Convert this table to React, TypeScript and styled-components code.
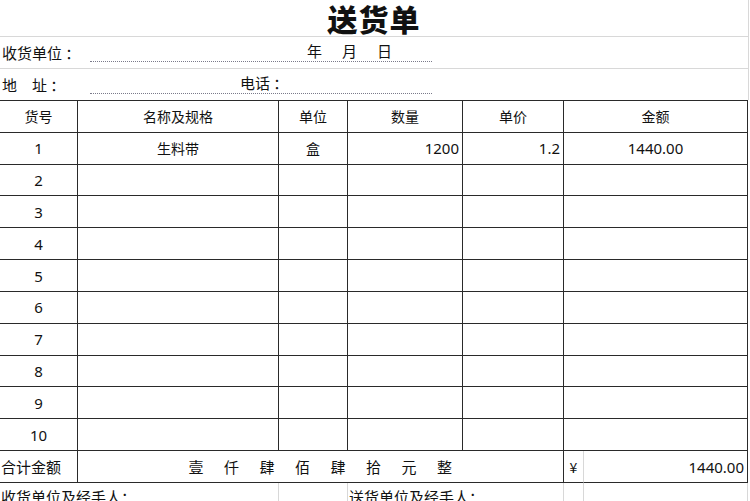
import React from "react";
import styled, { createGlobalStyle } from "styled-components";

const GlobalStyle = createGlobalStyle`
  html, body { margin: 0; padding: 0; background: #fff; }
  body {
    font-family: "Noto Sans", "Noto Sans CJK SC", sans-serif;
    color: #111;
  }
`;

const CJK = `"Noto Sans CJK SC", "Noto Sans", sans-serif`;
const NUM = `"Noto Sans", "Noto Sans CJK SC", sans-serif`;
const LINE = "#2a2a2a";
const GRID = "#d8d8d8";
const COLS = "78px 201px 69px 115px 101px 184px";

const Page = styled.div`
  width: 750px;
  height: 501px;
  overflow: hidden;
`;

const Title = styled.h1`
  margin: 0;
  width: 748px;
  height: 36px;
  border-bottom: 1px solid ${GRID};
  border-right: 1px solid ${GRID};
  display: flex;
  align-items: center;
  justify-content: center;
  font-family: ${CJK};
  font-weight: 900;
  font-size: 30px;
  letter-spacing: 1px;
  line-height: 36px;
`;

const InfoRow = styled.div<{ $last?: boolean }>`
  width: 748px;
  height: 31px;
  border-right: 1px solid ${GRID};
  border-bottom: ${(p) => (p.$last ? "none" : `1px solid ${GRID}`)};
  display: flex;
  align-items: center;
  font-family: ${CJK};
  font-size: 15px;
`;

const Label = styled.span`
  width: 90px;
  padding-left: 2px;
  box-sizing: border-box;
  white-space: pre;
`;

const Field = styled.div`
  width: 342px;
  height: 22px;
  align-self: flex-end;
  margin-bottom: 6px;
  border-bottom: 1px dotted #7a7a8a;
  display: flex;
  align-items: center;
  box-sizing: border-box;
`;

const FieldText = styled.span<{ $pad: number; $ls?: number }>`
  padding-left: ${(p) => p.$pad}px;
  letter-spacing: ${(p) => p.$ls ?? 0}px;
  white-space: pre;
  font-size: 15px;
`;

const Table = styled.div`
  width: 748px;
  border-top: 1px solid ${LINE};
  display: grid;
  grid-template-rows: repeat(12, 31.83px);
`;

const Row = styled.div<{ $cols?: string }>`
  display: grid;
  grid-template-columns: ${(p) => p.$cols ?? COLS};
`;

const Cell = styled.div<{ $align?: "left" | "center" | "right"; $num?: boolean; $soft?: boolean }>`
  box-sizing: border-box;
  border-bottom: 1px solid ${LINE};
  border-right: 1px solid ${(p) => (p.$soft ? GRID : LINE)};
  display: flex;
  align-items: center;
  justify-content: ${(p) =>
    p.$align === "left" ? "flex-start" : p.$align === "right" ? "flex-end" : "center"};
  padding: ${(p) => (p.$align === "right" ? "0 3px 0 0" : p.$align === "left" ? "0 0 0 1px" : "0")};
  font-family: ${(p) => (p.$num ? NUM : CJK)};
  font-size: ${(p) => (p.$num ? 15 : 14)}px;
  white-space: pre;
`;

const TotalLabel = styled(Cell)`
  font-size: 15px;
`;

const Words = styled.span`
  letter-spacing: 20.5px;
  padding-left: 20px;
  font-size: 15px;
`;

const Footer = styled.div`
  display: grid;
  grid-template-columns: 279px 69px 216px 20px 164px;
  height: 19px;
`;

const FootCell = styled.div`
  box-sizing: border-box;
  border-right: 1px solid ${GRID};
  padding: 4px 0 0 1px;
  font-family: ${CJK};
  font-size: 15px;
  line-height: 20px;
  white-space: nowrap;
`;

const headers = ["货号", "名称及规格", "单位", "数量", "单价", "金额"];

export default function App() {
  const rows = Array.from({ length: 10 }, (_, i) => i + 1);
  return (
    <Page>
      <GlobalStyle />
      <Title>送货单</Title>
      <InfoRow>
        <Label>{"收货单位 ："}</Label>
        <Field>
          <FieldText $pad={217} $ls={20}>年月日</FieldText>
        </Field>
      </InfoRow>
      <InfoRow $last>
        <Label>{"地　址 ："}</Label>
        <Field>
          <FieldText $pad={150}>{"电话 ："}</FieldText>
        </Field>
      </InfoRow>
      <Table>
        <Row>
          {headers.map((h) => (
            <Cell key={h}>{h}</Cell>
          ))}
        </Row>
        {rows.map((n) => (
          <Row key={n}>
            <Cell $num>{n}</Cell>
            <Cell>{n === 1 ? "生料带" : ""}</Cell>
            <Cell>{n === 1 ? "盒" : ""}</Cell>
            <Cell $num $align="right">{n === 1 ? "1200" : ""}</Cell>
            <Cell $num $align="right">{n === 1 ? "1.2" : ""}</Cell>
            <Cell $num>{n === 1 ? "1440.00" : ""}</Cell>
          </Row>
        ))}
        <Row $cols="78px 486px 20px 164px">
          <TotalLabel $align="left">合计金额</TotalLabel>
          <Cell>
            <Words>壹仟肆佰肆拾元整</Words>
          </Cell>
          <Cell $soft>¥</Cell>
          <Cell $num $align="right">1440.00</Cell>
        </Row>
      </Table>
      <Footer>
        <FootCell>收货单位及经手人：</FootCell>
        <FootCell />
        <FootCell>送货单位及经手人：</FootCell>
        <FootCell />
        <FootCell />
      </Footer>
    </Page>
  );
}
